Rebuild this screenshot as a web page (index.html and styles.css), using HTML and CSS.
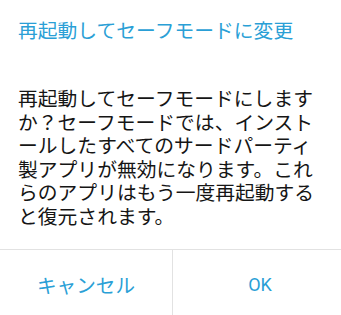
FILE: index.html
```html
<!DOCTYPE html>
<html lang="ja">
<head>
<meta charset="utf-8">
<link rel="stylesheet" href="styles.css">
</head>
<body>
<div class="dialog">
  <div class="title">再起動してセーフモードに変更</div>
  <div class="message">再起動してセーフモードにしますか？セーフモードでは、インストールしたすべてのサードパーティ製アプリが無効になります。これらのアプリはもう一度再起動すると復元されます。</div>
  <div class="buttons">
    <div class="btn">キャンセル</div>
    <div class="btn btn-right"><span class="latin">OK</span></div>
  </div>
</div>
</body>
</html>
```
FILE: styles.css
```css
html, body {
  margin: 0;
  padding: 0;
  background: #ffffff;
}
.dialog {
  width: 341px;
  height: 315px;
  display: flex;
  flex-direction: column;
  font-family: "Noto Sans CJK JP", "Noto Sans", sans-serif;
  background: #ffffff;
}
.title {
  padding: 18px 18px 0 18px;
  font-size: 19.8px;
  line-height: 24px;
  color: #2a9fd6;
  height: 42px;
  box-sizing: border-box;
}
.message {
  padding: 44px 18px 0 18px;
  font-size: 19.8px;
  line-height: 23.5px;
  color: #151515;
  line-break: anywhere;
  flex: 1;
}
.buttons {
  display: grid;
  grid-template-columns: 172px 1fr;
  height: 65px;
  border-top: 1px solid #e2e2e2;
}
.btn {
  display: flex;
  align-items: center;
  justify-content: center;
  color: #2a9fd6;
  font-size: 19.6px;
  padding-top: 3px;
  box-sizing: border-box;
}
.btn-right {
  border-left: 1px solid #e2e2e2;
  padding-left: 6px;
}
.latin {
  font-family: Roboto, "Noto Sans", sans-serif;
  font-size: 18px;
}
```
